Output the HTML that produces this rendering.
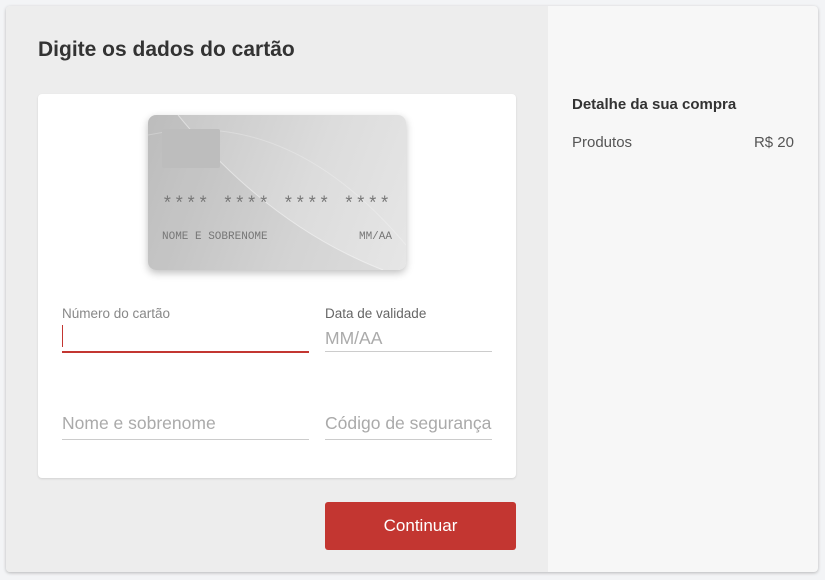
<!DOCTYPE html>
<html><head><meta charset="utf-8"><style>
*{box-sizing:border-box;margin:0;padding:0}
html,body{width:825px;height:580px;overflow:hidden}
body{background:#f3f4f6;font-family:"Liberation Sans",sans-serif;position:relative}
.wrap{position:absolute;left:6px;top:6px;width:812px;height:566px;border-radius:4px;overflow:hidden;box-shadow:0 1px 3px rgba(0,0,0,.25);background:#f7f7f7}
.left{position:absolute;left:0;top:0;width:542px;height:566px;background:#ededed}
h1{position:absolute;left:32px;top:32px;font-size:21px;font-weight:bold;color:#333}
.box{position:absolute;left:32px;top:88px;width:478px;height:384px;background:#fff;border-radius:4px;box-shadow:0 1px 2px rgba(0,0,0,.12)}
.card{position:absolute;left:110px;top:21px;width:258px;height:155px;border-radius:8px;overflow:hidden;background:linear-gradient(110deg,#c4c4c4,#dcdcdc 60%,#e6e6e6);box-shadow:0 3px 8px rgba(0,0,0,.25)}
.card svg{position:absolute;left:0;top:0}
.chip{position:absolute;left:14px;top:14px;width:58px;height:39px;background:#bdbdbd;border-radius:2px}
.num{position:absolute;left:14px;top:80px;font-family:"Liberation Mono",monospace;font-size:18px;color:#777;letter-spacing:1.1px;word-spacing:1px}
.nm{position:absolute;top:116px;font-family:"Liberation Mono",monospace;font-size:11px;color:#777}
.lab{position:absolute;font-size:13.5px;color:#888}
.fld{position:absolute;border-bottom:1px solid #ccc;height:30px;font-size:17.5px;color:#aaa;padding-top:6px}
.btn{position:absolute;left:319px;top:496px;width:191px;height:48px;background:#c33631;border-radius:3px;color:#fff;font-size:17px;text-align:center;line-height:48px}
.right h2{position:absolute;left:566px;top:90px;font-size:15px;font-weight:bold;color:#333}
.row{position:absolute;top:128px;font-size:15px;color:#555}
</style></head><body>
<div class="wrap">
<div class="left">
<h1>Digite os dados do cartão</h1>
<div class="box">
<div class="card"><svg width="258" height="155"><path d="M30 0 Q120 110 235 155 L0 155 L0 0Z" fill="rgba(0,0,0,0.04)"/><path d="M30 0 Q120 110 235 155" fill="none" stroke="rgba(255,255,255,0.45)"/><path d="M0 20 Q140 -10 258 130" fill="none" stroke="rgba(255,255,255,0.25)"/></svg><div class="chip"></div>
<div class="num">**** **** **** ****</div>
<div class="nm" style="left:14px">NOME E SOBRENOME</div>
<div class="nm" style="right:14px">MM/AA</div></div>
<div class="lab" style="left:24px;top:212px">Número do cartão</div>
<div class="fld" style="left:24px;top:228px;width:247px;border-bottom:2px solid #c33631;height:31px"><span style="display:inline-block;width:1px;height:22px;background:#c33631;margin-top:-3px"></span></div>
<div class="lab" style="left:287px;top:212px;color:#666">Data de validade</div>
<div class="fld" style="left:287px;top:228px;width:167px">MM/AA</div>
<div class="fld" style="left:24px;top:314px;width:247px;height:32px;padding-top:5px">Nome e sobrenome</div>
<div class="fld" style="left:287px;top:314px;width:167px;height:32px;padding-top:5px;white-space:nowrap">Código de segurança</div>
</div>
<div class="btn">Continuar</div>
</div>
<div class="right"><h2>Detalhe da sua compra</h2>
<div class="row" style="left:566px">Produtos</div>
<div class="row" style="right:24px">R$ 20</div></div>
</div>
</body></html>
